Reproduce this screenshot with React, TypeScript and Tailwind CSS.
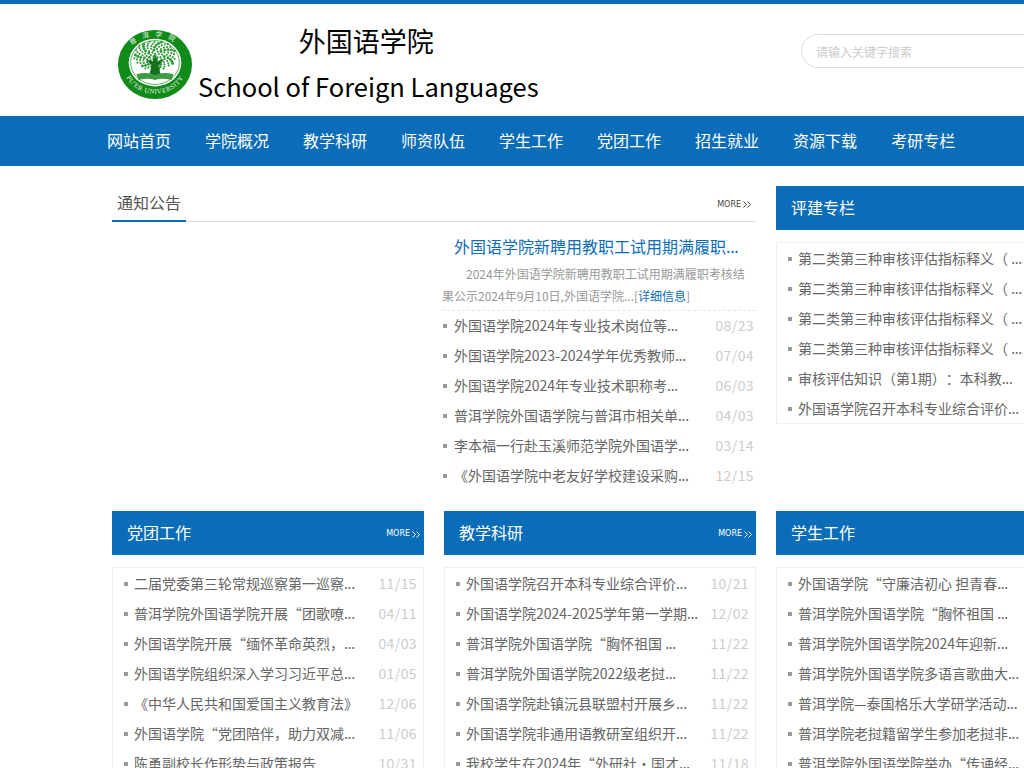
const FONT = "font-['Noto_Sans_CJK_SC','Noto_Sans',sans-serif] [text-spacing-trim:space-all]";

const notices: [string, string][] = [
  ["外国语学院2024年专业技术岗位等...", "08/23"],
  ["外国语学院2023-2024学年优秀教师...", "07/04"],
  ["外国语学院2024年专业技术职称考...", "06/03"],
  ["普洱学院外国语学院与普洱市相关单...", "04/03"],
  ["李本福一行赴玉溪师范学院外国语学...", "03/14"],
  ["《外国语学院中老友好学校建设采购...", "12/15"],
];
const pingjian = [
  "第二类第三种审核评估指标释义（ ...",
  "第二类第三种审核评估指标释义（ ...",
  "第二类第三种审核评估指标释义（ ...",
  "第二类第三种审核评估指标释义（ ...",
  "审核评估知识（第1期）：本科教...",
  "外国语学院召开本科专业综合评价...",
];
const dangtuan: [string, string][] = [
  ["二届党委第三轮常规巡察第一巡察...", "11/15"],
  ["普洱学院外国语学院开展“团歌嘹...", "04/11"],
  ["外国语学院开展“缅怀革命英烈，...", "04/03"],
  ["外国语学院组织深入学习习近平总...", "01/05"],
  ["《中华人民共和国爱国主义教育法》", "12/06"],
  ["外国语学院“党团陪伴，助力双减...", "11/06"],
  ["陈勇副校长作形势与政策报告", "10/31"],
];
const jiaoxue: [string, string][] = [
  ["外国语学院召开本科专业综合评价...", "10/21"],
  ["外国语学院2024-2025学年第一学期...", "12/02"],
  ["普洱学院外国语学院“胸怀祖国 ...", "11/22"],
  ["普洱学院外国语学院2022级老挝...", "11/22"],
  ["外国语学院赴镇沅县联盟村开展乡...", "11/22"],
  ["外国语学院非通用语教研室组织开...", "11/22"],
  ["我校学生在2024年“外研社·国才...", "11/18"],
];
const xuesheng = [
  "外国语学院“守廉洁初心 担青春...",
  "普洱学院外国语学院“胸怀祖国 ...",
  "普洱学院外国语学院2024年迎新...",
  "普洱学院外国语学院多语言歌曲大...",
  "普洱学院—泰国格乐大学研学活动...",
  "普洱学院老挝籍留学生参加老挝非...",
  "普洱学院外国语学院举办“传诵经...",
];
const nav = ["网站首页", "学院概况", "教学科研", "师资队伍", "学生工作", "党团工作", "招生就业", "资源下载", "考研专栏"];

const leaves: [number, number][] = [];
for (let a = 0; a < 110; a++) {
  const r = Math.sqrt(a) * 2.2;
  const t = a * 2.399;
  leaves.push([39 + r * 0.95 * Math.cos(t), 27 + r * 0.66 * Math.sin(t)]);
}

function Logo() {
  return (
    <svg width="76" height="71" viewBox="0 0 78 72" className="shrink-0">
      <defs>
        <path id="ringBottom" d="M6 36 A33 30 0 0 0 72 36" fill="none" />
        <path id="ringTop" d="M7 30 A32.500 27 0 0 1 71 30" fill="none" />
      </defs>
      <ellipse cx="39" cy="36" rx="38" ry="35.500" fill="#108a18" />
      <ellipse cx="39" cy="34" rx="27" ry="24.500" fill="#fff" />
      <ellipse cx="39" cy="34" rx="25" ry="22.500" fill="none" stroke="#108a18" strokeWidth="0.7" />
      <g fill="#2f9a38">
        {leaves.map(([x, y], i) => (
          <circle key={i} cx={x} cy={y} r={i % 3 === 0 ? 1.5 : 1.1} />
        ))}
      </g>
      <path d="M33 47 L35.500 37 L29 30 L36.500 33 L39 27 L41.500 33 L49 30 L42.500 37 L45 47 Z" fill="#14701d" />
      <path d="M20 46 Q31 43 39 47 Q47 43 58 46 L56 52 Q46 49 39 52 Q32 49 22 52 Z" fill="#3c9a42" />
      <text fontSize="7" fontFamily="Liberation Serif, serif" fill="#e8f6e8" letterSpacing="0.5">
        <textPath href="#ringBottom" startOffset="50%" textAnchor="middle">PU'ER UNIVERSITY</textPath>
      </text>
      <text fontSize="7" fontFamily="Noto Sans CJK SC, sans-serif" fill="#e8f6e8" letterSpacing="6">
        <textPath href="#ringTop" startOffset="50%" textAnchor="middle">普洱学院</textPath>
      </text>
    </svg>
  );
}

function More({ light }: { light?: boolean }) {
  const c = light ? "text-white" : "text-[#444]";
  return (
    <span className={`flex items-center gap-[2px] ${c}`}>
      <span className="font-['DejaVu_Sans',sans-serif] text-[8px] leading-none">MORE</span>
      <svg width="8" height="7" viewBox="0 0 8 7" fill="none" stroke="currentColor" strokeWidth="1">
        <path d="M.5 .5 3.500 3.500 .5 6.500M4.500 .5 7.500 3.500 4.500 6.500" />
      </svg>
    </span>
  );
}

function Dots({ text }: { text: string }) {
  if (!text.endsWith("...")) return <>{text}</>;
  return (
    <>
      {text.slice(0, -3)}
      <span className="tracking-[-0.3px]">...</span>
    </>
  );
}

function Bar({ title, more }: { title: string; more?: boolean }) {
  return (
    <div className="h-11 bg-[#0b6db8] flex items-center justify-between pl-[15px] pr-[4px]">
      <span className="text-base text-white mb-[2px]">{title}</span>
      {more && <span className="mt-[2px]"><More light /></span>}
    </div>
  );
}

function Row({ text, date, px, gap }: { text: string; date?: string; px: string; gap: string }) {
  return (
    <li className={`h-[30px] flex items-center text-sm ${px}`}>
      <span className={`w-1 h-1 bg-[#999] shrink-0 ${gap}`} />
      <span className="text-[#666] whitespace-nowrap mb-[2px]"><Dots text={text} /></span>
      {date && <span className="ml-auto text-[#ccc] tracking-[0.4px] mb-[2px]">{date}</span>}
    </li>
  );
}

function Panel({ title, rows, more, short }: { title: string; rows: ([string, string] | string)[]; more?: boolean; short?: boolean }) {
  return (
    <section className="w-[312px]">
      <Bar title={title} more={more} />
      <ul className={`mt-3 border border-[#eee] pt-[1px] ${short ? "h-[182px]" : "h-[240px]"}`}>
        {rows.map((r, i) =>
          typeof r === "string" ? (
            <Row key={i} text={r} px="pl-[11px] pr-[6px]" gap="mr-[6px]" />
          ) : (
            <Row key={i} text={r[0]} date={r[1]} px="pl-[11px] pr-[6px]" gap="mr-[6px]" />
          ),
        )}
      </ul>
    </section>
  );
}

export default function App() {
  return (
    <div className={`${FONT} w-[1024px] h-[768px] overflow-hidden bg-white border-t-4 border-[#0b6db8]`}>
      <header className="h-[112px] flex pl-[112px] overflow-hidden">
        <div className="w-[689px] shrink-0 flex items-start">
          <div className="w-[86px] pt-[25px] pl-[5px] shrink-0"><Logo /></div>
          <div className="text-center text-black leading-[46px] pt-[14px]">
            <div className="text-[27px] pr-[4px]">外国语学院</div>
            <div className="text-[25.5px] -mt-px whitespace-nowrap">School of Foreign Languages</div>
          </div>
        </div>
        <div className="mt-[30px] w-[300px] h-[34px] shrink-0 rounded-full border border-[#ddd] pl-[14px] pt-[1px] flex items-center text-xs text-[#ccc]">
          请输入关键字搜索
        </div>
      </header>
      <nav className="h-[50px] bg-[#0b6db8] flex items-center pl-[90px]">
        {nav.map((n) => (
          <a key={n} className="px-[17px] text-base text-white whitespace-nowrap mb-[2px]">{n}</a>
        ))}
      </nav>
      <main className="w-[976px] ml-[112px] pt-5">
        <div className="flex gap-5 h-[325px]">
          <section className="w-[644px]">
            <div className="h-9 border-b border-[#ddd] flex items-center justify-between relative">
              <span className="h-9 w-[74px] pl-[5px] pb-[2px] text-base text-[#555] border-b-2 border-[#0b6db8] flex items-center -mb-px">通知公告</span>
              <span className="pr-[5px] mt-[2px]"><More /></span>
            </div>
            <div className="ml-[331px] mt-[8px]">
              <h3 className="pl-[11px] h-[32px] text-base leading-[32px] text-[#0b6db8] whitespace-nowrap"><Dots text="外国语学院新聘用教职工试用期满履职..." /></h3>
              <p className="text-xs leading-[22px] text-[#999] indent-6 -ml-px border-b border-dashed border-[#e5e5e5] pb-[3px] mt-[1px]">
                2024年外国语学院新聘用教职工试用期满履职考核结果公示2024年9月10日,外国语学院...[<span className="text-[#0b6db8]">详细信息</span>]
              </p>
              <ul>
                {notices.map((r) => (
                  <Row key={r[0]} text={r[0]} date={r[1]} px="pr-[2px]" gap="mr-[7px]" />
                ))}
              </ul>
            </div>
          </section>
          <Panel title="评建专栏" rows={pingjian} short />
        </div>
        <div className="flex gap-5">
          <Panel title="党团工作" rows={dangtuan} more />
          <Panel title="教学科研" rows={jiaoxue} more />
          <Panel title="学生工作" rows={xuesheng} />
        </div>
      </main>
    </div>
  );
}
